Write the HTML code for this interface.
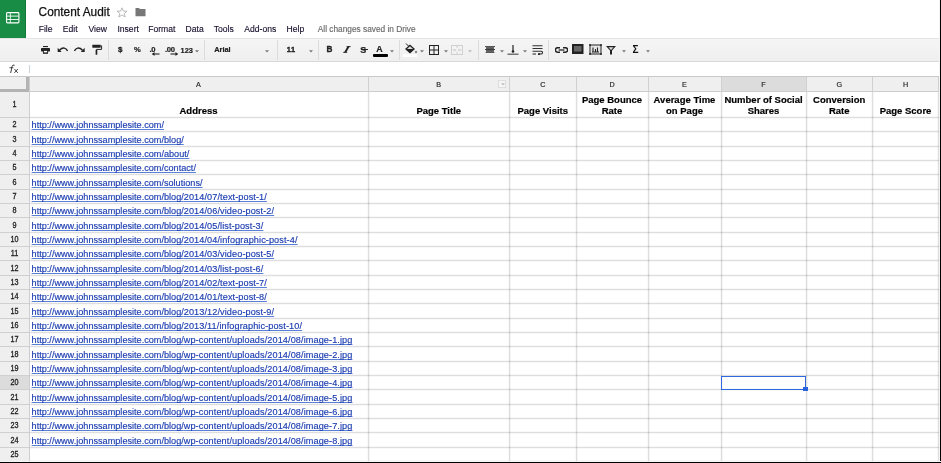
<!DOCTYPE html>
<html><head><meta charset="utf-8"><style>
html,body{margin:0;padding:0;background:#fff;}
body{width:941px;height:463px;position:relative;overflow:hidden;font-family:"Liberation Sans", sans-serif;}
.t{position:absolute;white-space:nowrap;}
.r{position:absolute;}
</style></head><body>
<div class="r" style="left:0px;top:0px;width:26px;height:38px;background:#188c45;"></div>
<svg class="r" style="left:6px;top:12px" width="14" height="12" viewBox="0 0 14 12">
<rect x="0.6" y="0.6" width="12.3" height="10.3" rx="0.8" fill="none" stroke="#fff" stroke-width="1.1"/>
<line x1="0.6" y1="4.1" x2="12.9" y2="4.1" stroke="#fff" stroke-width="0.9"/>
<line x1="0.6" y1="7.5" x2="12.9" y2="7.5" stroke="#fff" stroke-width="0.9"/>
<line x1="4.3" y1="0.6" x2="4.3" y2="10.9" stroke="#fff" stroke-width="0.9"/>
</svg>
<div class="r" style="left:25px;top:0px;width:1px;height:38px;background:#137a3a;"></div>
<div class="t" style="left:38.60px;top:7.07px;font-size:11.85px;line-height:11.85px;color:#111;font-weight:normal;-webkit-text-stroke:0.25px #111">Content Audit</div>
<svg class="r" style="left:116px;top:7px" width="12" height="11" viewBox="0 0 12 11">
<polygon points="6,0.8 7.4,4.1 11,4.2 8.2,6.5 9.2,10 6,8 2.8,10 3.8,6.5 1,4.2 4.6,4.1" fill="none" stroke="#aaa" stroke-width="0.8"/>
</svg>
<svg class="r" style="left:135px;top:7px" width="11" height="10" viewBox="0 0 11 10">
<path d="M0.5 1 H4 L5 2 H10.5 V9.3 H0.5 Z" fill="#777"/>
</svg>
<div class="t" style="left:38.70px;top:24.62px;font-size:8.6px;line-height:8.6px;color:#140c2a;font-weight:normal;-webkit-text-stroke:0.12px #140c2a;transform:scaleY(1.1);transform-origin:0 7.28px">File</div>
<div class="t" style="left:62.80px;top:24.62px;font-size:8.6px;line-height:8.6px;color:#140c2a;font-weight:normal;-webkit-text-stroke:0.12px #140c2a;transform:scaleY(1.1);transform-origin:0 7.28px">Edit</div>
<div class="t" style="left:88.40px;top:24.62px;font-size:8.6px;line-height:8.6px;color:#140c2a;font-weight:normal;-webkit-text-stroke:0.12px #140c2a;transform:scaleY(1.1);transform-origin:0 7.28px">View</div>
<div class="t" style="left:117.40px;top:24.62px;font-size:8.6px;line-height:8.6px;color:#140c2a;font-weight:normal;-webkit-text-stroke:0.12px #140c2a;transform:scaleY(1.1);transform-origin:0 7.28px">Insert</div>
<div class="t" style="left:148.20px;top:24.62px;font-size:8.6px;line-height:8.6px;color:#140c2a;font-weight:normal;-webkit-text-stroke:0.12px #140c2a;transform:scaleY(1.1);transform-origin:0 7.28px">Format</div>
<div class="t" style="left:185.60px;top:24.62px;font-size:8.6px;line-height:8.6px;color:#140c2a;font-weight:normal;-webkit-text-stroke:0.12px #140c2a;transform:scaleY(1.1);transform-origin:0 7.28px">Data</div>
<div class="t" style="left:213.70px;top:24.62px;font-size:8.6px;line-height:8.6px;color:#140c2a;font-weight:normal;-webkit-text-stroke:0.12px #140c2a;transform:scaleY(1.1);transform-origin:0 7.28px">Tools</div>
<div class="t" style="left:244.30px;top:24.62px;font-size:8.6px;line-height:8.6px;color:#140c2a;font-weight:normal;-webkit-text-stroke:0.12px #140c2a;transform:scaleY(1.1);transform-origin:0 7.28px">Add-ons</div>
<div class="t" style="left:286.50px;top:24.62px;font-size:8.6px;line-height:8.6px;color:#140c2a;font-weight:normal;-webkit-text-stroke:0.12px #140c2a;transform:scaleY(1.1);transform-origin:0 7.28px">Help</div>
<div class="t" style="left:317.80px;top:24.87px;font-size:8.3px;line-height:8.3px;color:#6a6a6a;font-weight:normal;-webkit-text-stroke:0.15px #6a6a6a">All changes saved in Drive</div>
<div class="r" style="left:0px;top:38px;width:941px;height:1px;background:#e5e5e5;"></div>
<div class="r" style="left:0px;top:39px;width:941px;height:22px;background:linear-gradient(#f5f5f5,#efefef);"></div>
<div class="r" style="left:0px;top:61px;width:941px;height:1px;background:#d9d9d9;"></div>
<div class="r" style="left:108px;top:40px;width:1px;height:20px;background:#dcdcdc;"></div>
<div class="r" style="left:204px;top:40px;width:1px;height:20px;background:#dcdcdc;"></div>
<div class="r" style="left:277px;top:40px;width:1px;height:20px;background:#dcdcdc;"></div>
<div class="r" style="left:318px;top:40px;width:1px;height:20px;background:#dcdcdc;"></div>
<div class="r" style="left:399px;top:40px;width:1px;height:20px;background:#dcdcdc;"></div>
<div class="r" style="left:478px;top:40px;width:1px;height:20px;background:#dcdcdc;"></div>
<div class="r" style="left:548px;top:40px;width:1px;height:20px;background:#dcdcdc;"></div>
<div id="icons">
<svg class="r" style="left:40px;top:45px" width="11" height="10" viewBox="0 0 11 10">
<rect x="3" y="1" width="5" height="1.1" fill="#222"/>
<rect x="1" y="3" width="9" height="3.4" rx="0.6" fill="#222"/>
<rect x="3.4" y="5.4" width="4.2" height="2.7" fill="#fff" stroke="#222" stroke-width="0.9"/>
<rect x="3" y="7.6" width="5" height="1" fill="#222"/>
</svg>
<svg class="r" style="left:57px;top:46px" width="11" height="7" viewBox="0 0 11 7">
<path d="M10.6 5 C9.2 2 6 0.6 2.5 4.2" fill="none" stroke="#222" stroke-width="1.5"/>
<polygon points="0.7,1.8 0.7,6 4.6,6" fill="#222"/>
</svg>
<svg class="r" style="left:74px;top:46px" width="11" height="7" viewBox="0 0 11 7">
<path d="M0.4 5 C1.8 2 5 0.6 8.5 4.2" fill="none" stroke="#222" stroke-width="1.5"/>
<polygon points="10.7,1.8 10.7,6 6.8,6" fill="#222"/>
</svg>
<svg class="r" style="left:92px;top:44px" width="11" height="12" viewBox="0 0 11 12">
<rect x="0.3" y="0.7" width="8.4" height="3" rx="0.4" fill="#222"/>
<path d="M8.6 1.8 H9.6 V5.4 H4.4 V6.5" fill="none" stroke="#222" stroke-width="1"/>
<rect x="3.6" y="6" width="1.7" height="4.7" rx="0.5" fill="#222"/>
</svg>
<div class="t" style="left:117.90px;top:46.43px;font-size:8.0px;line-height:8.0px;color:#222;font-weight:bold;-webkit-text-stroke:0.3px #222">$</div>
<div class="t" style="left:134.00px;top:46.37px;font-size:7.6px;line-height:7.6px;color:#222;font-weight:bold;-webkit-text-stroke:0.2px #222">%</div>
<div class="t" style="left:149.50px;top:46.37px;font-size:7.6px;line-height:7.6px;color:#222;font-weight:bold;letter-spacing:-0.3px;-webkit-text-stroke:0.2px #222">.0</div>
<svg class="r" style="left:152px;top:52px" width="8" height="4" viewBox="0 0 8 4"><path d="M0.5 2 H7.5" stroke="#222" stroke-width="1.1"/><polygon points="0,2 2.5,0 2.5,4" fill="#222"/></svg>
<div class="t" style="left:165.00px;top:46.37px;font-size:7.6px;line-height:7.6px;color:#222;font-weight:bold;letter-spacing:-0.3px;-webkit-text-stroke:0.2px #222">.00</div>
<svg class="r" style="left:170px;top:52px" width="8" height="4" viewBox="0 0 8 4"><path d="M0.5 2 H7.5" stroke="#222" stroke-width="1.1"/><polygon points="8,2 5.5,0 5.5,4" fill="#222"/></svg>
<div class="t" style="left:180.60px;top:46.54px;font-size:7.4px;line-height:7.4px;color:#222;font-weight:bold;-webkit-text-stroke:0.2px #222">123</div>
<svg class="r" style="left:195px;top:49.5px" width="4" height="3" viewBox="0 0 4 3"><polygon points="0,0.3 4,0.3 2,2.5" fill="#777"/></svg>
<div class="t" style="left:214.20px;top:46.34px;font-size:7.4px;line-height:7.4px;color:#222;font-weight:bold;-webkit-text-stroke:0.2px #222">Arial</div>
<svg class="r" style="left:264.5px;top:49.5px" width="4" height="3" viewBox="0 0 4 3"><polygon points="0,0.3 4,0.3 2,2.5" fill="#777"/></svg>
<div class="t" style="left:286.80px;top:46.44px;font-size:7.4px;line-height:7.4px;color:#222;font-weight:bold;-webkit-text-stroke:0.35px #222;letter-spacing:0.5px">11</div>
<svg class="r" style="left:308.5px;top:49.5px" width="4" height="3" viewBox="0 0 4 3"><polygon points="0,0.3 4,0.3 2,2.5" fill="#777"/></svg>
<div class="t" style="left:326.60px;top:46.16px;font-size:8.2px;line-height:8.2px;color:#222;font-weight:bold;-webkit-text-stroke:0.3px #222">B</div>
<svg class="r" style="left:343px;top:46px" width="8" height="7" viewBox="0 0 8 7"><polygon points="4.6,0.3 6.8,0.3 3.2,6.5 1,6.5" fill="#222"/><path d="M3.6 0.6 H7.6 M0.2 6.3 H4.2" stroke="#222" stroke-width="0.9"/></svg>
<div class="t" style="left:360.20px;top:45.58px;font-size:9px;line-height:9px;color:#222;font-weight:bold;-webkit-text-stroke:0.2px #222">S</div>
<div class="r" style="left:360.5px;top:49.2px;width:7px;height:1.1px;background:#222;"></div>
<div class="t" style="left:376.20px;top:44.95px;font-size:8.8px;line-height:8.8px;color:#222;font-weight:bold;-webkit-text-stroke:0.2px #222">A</div>
<div class="r" style="left:373px;top:54px;width:15px;height:3px;background:#000;border-radius:1px"></div>
<svg class="r" style="left:389.5px;top:50px" width="4" height="3" viewBox="0 0 4 3"><polygon points="0,0.3 4,0.3 2,2.5" fill="#777"/></svg>
<svg class="r" style="left:404px;top:43px" width="14" height="11" viewBox="0 0 14 11">
<path d="M2 0.5 L5 3.5" stroke="#222" stroke-width="1"/>
<polygon points="1,6 6,1.5 11,6 6,10.5" fill="#222"/>
<polygon points="3,6 6,3.3 9,6" fill="#ddd"/>
<circle cx="12" cy="9" r="1.2" fill="#888"/>
</svg>
<div class="r" style="left:403px;top:54px;width:14px;height:3px;background:#fff;"></div>
<svg class="r" style="left:420px;top:50px" width="4" height="3" viewBox="0 0 4 3"><polygon points="0,0.3 4,0.3 2,2.5" fill="#777"/></svg>
<svg class="r" style="left:429px;top:45px" width="10" height="10" viewBox="0 0 10 10">
<rect x="0.5" y="0.5" width="9" height="9" fill="none" stroke="#222" stroke-width="1"/>
<path d="M5 0.5 V9.5 M0.5 5 H9.5" stroke="#222" stroke-width="1"/>
</svg>
<svg class="r" style="left:444px;top:50px" width="4" height="3" viewBox="0 0 4 3"><polygon points="0,0.3 4,0.3 2,2.5" fill="#777"/></svg>
<svg class="r" style="left:451px;top:45px" width="12" height="10" viewBox="0 0 12 10">
<rect x="0.5" y="0.5" width="11" height="9" fill="none" stroke="#cfcfcf" stroke-width="1"/>
<path d="M6 0.5 V3 M6 7 V9.5 M1.5 5 H4.5 M7.5 5 H10.5" stroke="#cfcfcf" stroke-width="1"/>
<polygon points="5.2,5 3.6,3.6 3.6,6.4" fill="#cfcfcf"/><polygon points="6.8,5 8.4,3.6 8.4,6.4" fill="#cfcfcf"/>
</svg>
<svg class="r" style="left:468px;top:50px" width="4" height="3" viewBox="0 0 4 3"><polygon points="0,0.3 4,0.3 2,2.5" fill="#bbb"/></svg>
<svg class="r" style="left:484.5px;top:45.5px" width="10" height="7" viewBox="0 0 10 7">
<rect x="1" y="1" width="8" height="5" fill="#888"/>
<path d="M0 0.6 H10 M1.2 2.1 H8.8 M0 3.5 H10 M1.2 4.9 H8.8 M0.6 6.4 H9.4" stroke="#333" stroke-width="0.9"/>
</svg>
<svg class="r" style="left:499.5px;top:50px" width="4" height="3" viewBox="0 0 4 3"><polygon points="0,0.3 4,0.3 2,2.5" fill="#777"/></svg>
<svg class="r" style="left:507px;top:45px" width="12" height="10" viewBox="0 0 12 10">
<path d="M6 0 V6.5" stroke="#222" stroke-width="1.2"/>
<circle cx="6" cy="6.5" r="1.3" fill="#222"/>
<path d="M0.5 9.2 H11.5" stroke="#555" stroke-width="1.2"/>
</svg>
<svg class="r" style="left:523px;top:50px" width="4" height="3" viewBox="0 0 4 3"><polygon points="0,0.3 4,0.3 2,2.5" fill="#777"/></svg>
<svg class="r" style="left:532px;top:45px" width="11" height="10" viewBox="0 0 11 10">
<path d="M0.5 0.7 H10.5 M0.5 3.5 H10.5 M0.5 6.2 H9 Q10.5 6.2 10.5 7.6 Q10.5 9 9 9 H7" fill="none" stroke="#333" stroke-width="1.1"/>
<path d="M0.5 9 H4" stroke="#333" stroke-width="1.1"/>
<circle cx="7" cy="9" r="1.1" fill="#222"/>
</svg>
<svg class="r" style="left:554.5px;top:46.5px" width="13" height="6" viewBox="0 0 13 6">
<path d="M5 0.8 H2.6 A2.1 2.1 0 0 0 2.6 5.2 H5" fill="none" stroke="#222" stroke-width="1.4"/>
<path d="M8 0.8 H10.4 A2.1 2.1 0 0 1 10.4 5.2 H8" fill="none" stroke="#222" stroke-width="1.4"/>
<path d="M3.6 3 H9.4" stroke="#222" stroke-width="1.3"/>
</svg>
<svg class="r" style="left:572px;top:44px" width="12" height="10" viewBox="0 0 12 10">
<rect x="0" y="0" width="11.5" height="10" fill="#222"/>
<rect x="2" y="2" width="7.5" height="5.5" fill="#666"/>
</svg>
<svg class="r" style="left:588.5px;top:43.5px" width="13" height="11" viewBox="0 0 13 11">
<rect x="1" y="1" width="11" height="9" fill="#e6e6e6" stroke="#222" stroke-width="1"/>
<circle cx="1" cy="1" r="0.9" fill="#222"/><circle cx="12" cy="1" r="0.9" fill="#222"/><circle cx="1" cy="10" r="0.9" fill="#222"/><circle cx="12" cy="10" r="0.9" fill="#222"/>
<path d="M4 3.5 V8 M6.5 5 V8 M8.5 3.5 V8 M3 8 H10" stroke="#222" stroke-width="1.1"/>
</svg>
<svg class="r" style="left:606px;top:45.5px" width="10" height="9" viewBox="0 0 10 9">
<polygon points="0,0 10,0 6,4.5 6,8.5 4,8.5 4,4.5" fill="#222"/>
<polygon points="2.5,1.3 7.5,1.3 5,4" fill="#ddd"/>
</svg>
<svg class="r" style="left:622px;top:49.5px" width="4" height="3" viewBox="0 0 4 3"><polygon points="0,0.3 4,0.3 2,2.5" fill="#777"/></svg>
<div class="t" style="left:632.50px;top:44.83px;font-size:10px;line-height:10px;color:#111;font-weight:bold;">&Sigma;</div>
<svg class="r" style="left:645.5px;top:49.5px" width="4" height="3" viewBox="0 0 4 3"><polygon points="0,0.3 4,0.3 2,2.5" fill="#777"/></svg>
</div>
<svg class="r" style="left:8px;top:64px" width="12" height="10" viewBox="0 0 12 10">
<path d="M6.6 1.3 Q4.6 0.2 4 2.6 L2.7 9" fill="none" stroke="#333" stroke-width="0.95"/>
<path d="M1.4 3.7 H5.4" stroke="#333" stroke-width="0.85"/>
<path d="M6.4 5 L9.8 8.9 M9.8 5 L6.4 8.9" stroke="#333" stroke-width="0.9"/>
</svg>
<div class="r" style="left:29px;top:65px;width:1px;height:8px;background:#c9d1da;"></div>
<div class="r" style="left:0px;top:76px;width:941px;height:1px;background:#c9c9c9;"></div>
<div class="r" style="left:0px;top:77px;width:941px;height:15px;background:#efefef;"></div>
<div class="r" style="left:721px;top:77px;width:85px;height:15px;background:#dcdcdc;"></div>
<div class="r" style="left:0px;top:91px;width:941px;height:1px;background:#cdcdcd;"></div>
<div class="r" style="left:0px;top:92px;width:29px;height:371px;background:#efefef;"></div>
<div class="r" style="left:0px;top:376px;width:29px;height:13px;background:#dcdcdc;"></div>
<div class="r" style="left:26px;top:77px;width:3px;height:15px;background:#b3b3b3;"></div>
<div class="r" style="left:0px;top:89px;width:29px;height:3px;background:#b3b3b3;"></div>
<div class="r" style="left:0px;top:117px;width:29px;height:1px;background:#d0d0d0;"></div>
<div class="r" style="left:30px;top:116px;width:909px;height:3px;background:linear-gradient(#f8f8f8 0,#f8f8f8 1px,#dedede 1px,#dedede 2px,#f8f8f8 2px);mix-blend-mode:multiply"></div>
<div class="r" style="left:0px;top:131px;width:29px;height:1px;background:#d0d0d0;"></div>
<div class="r" style="left:30px;top:130px;width:909px;height:3px;background:linear-gradient(#f8f8f8 0,#f8f8f8 1px,#dedede 1px,#dedede 2px,#f8f8f8 2px);mix-blend-mode:multiply"></div>
<div class="r" style="left:0px;top:146px;width:29px;height:1px;background:#d0d0d0;"></div>
<div class="r" style="left:30px;top:145px;width:909px;height:3px;background:linear-gradient(#f8f8f8 0,#f8f8f8 1px,#dedede 1px,#dedede 2px,#f8f8f8 2px);mix-blend-mode:multiply"></div>
<div class="r" style="left:0px;top:160px;width:29px;height:1px;background:#d0d0d0;"></div>
<div class="r" style="left:30px;top:159px;width:909px;height:3px;background:linear-gradient(#f8f8f8 0,#f8f8f8 1px,#dedede 1px,#dedede 2px,#f8f8f8 2px);mix-blend-mode:multiply"></div>
<div class="r" style="left:0px;top:174px;width:29px;height:1px;background:#d0d0d0;"></div>
<div class="r" style="left:30px;top:173px;width:909px;height:3px;background:linear-gradient(#f8f8f8 0,#f8f8f8 1px,#dedede 1px,#dedede 2px,#f8f8f8 2px);mix-blend-mode:multiply"></div>
<div class="r" style="left:0px;top:189px;width:29px;height:1px;background:#d0d0d0;"></div>
<div class="r" style="left:30px;top:188px;width:909px;height:3px;background:linear-gradient(#f8f8f8 0,#f8f8f8 1px,#dedede 1px,#dedede 2px,#f8f8f8 2px);mix-blend-mode:multiply"></div>
<div class="r" style="left:0px;top:203px;width:29px;height:1px;background:#d0d0d0;"></div>
<div class="r" style="left:30px;top:202px;width:909px;height:3px;background:linear-gradient(#f8f8f8 0,#f8f8f8 1px,#dedede 1px,#dedede 2px,#f8f8f8 2px);mix-blend-mode:multiply"></div>
<div class="r" style="left:0px;top:217px;width:29px;height:1px;background:#d0d0d0;"></div>
<div class="r" style="left:30px;top:216px;width:909px;height:3px;background:linear-gradient(#f8f8f8 0,#f8f8f8 1px,#dedede 1px,#dedede 2px,#f8f8f8 2px);mix-blend-mode:multiply"></div>
<div class="r" style="left:0px;top:232px;width:29px;height:1px;background:#d0d0d0;"></div>
<div class="r" style="left:30px;top:231px;width:909px;height:3px;background:linear-gradient(#f8f8f8 0,#f8f8f8 1px,#dedede 1px,#dedede 2px,#f8f8f8 2px);mix-blend-mode:multiply"></div>
<div class="r" style="left:0px;top:246px;width:29px;height:1px;background:#d0d0d0;"></div>
<div class="r" style="left:30px;top:245px;width:909px;height:3px;background:linear-gradient(#f8f8f8 0,#f8f8f8 1px,#dedede 1px,#dedede 2px,#f8f8f8 2px);mix-blend-mode:multiply"></div>
<div class="r" style="left:0px;top:260px;width:29px;height:1px;background:#d0d0d0;"></div>
<div class="r" style="left:30px;top:259px;width:909px;height:3px;background:linear-gradient(#f8f8f8 0,#f8f8f8 1px,#dedede 1px,#dedede 2px,#f8f8f8 2px);mix-blend-mode:multiply"></div>
<div class="r" style="left:0px;top:275px;width:29px;height:1px;background:#d0d0d0;"></div>
<div class="r" style="left:30px;top:274px;width:909px;height:3px;background:linear-gradient(#f8f8f8 0,#f8f8f8 1px,#dedede 1px,#dedede 2px,#f8f8f8 2px);mix-blend-mode:multiply"></div>
<div class="r" style="left:0px;top:289px;width:29px;height:1px;background:#d0d0d0;"></div>
<div class="r" style="left:30px;top:288px;width:909px;height:3px;background:linear-gradient(#f8f8f8 0,#f8f8f8 1px,#dedede 1px,#dedede 2px,#f8f8f8 2px);mix-blend-mode:multiply"></div>
<div class="r" style="left:0px;top:303px;width:29px;height:1px;background:#d0d0d0;"></div>
<div class="r" style="left:30px;top:302px;width:909px;height:3px;background:linear-gradient(#f8f8f8 0,#f8f8f8 1px,#dedede 1px,#dedede 2px,#f8f8f8 2px);mix-blend-mode:multiply"></div>
<div class="r" style="left:0px;top:318px;width:29px;height:1px;background:#d0d0d0;"></div>
<div class="r" style="left:30px;top:317px;width:909px;height:3px;background:linear-gradient(#f8f8f8 0,#f8f8f8 1px,#dedede 1px,#dedede 2px,#f8f8f8 2px);mix-blend-mode:multiply"></div>
<div class="r" style="left:0px;top:332px;width:29px;height:1px;background:#d0d0d0;"></div>
<div class="r" style="left:30px;top:331px;width:909px;height:3px;background:linear-gradient(#f8f8f8 0,#f8f8f8 1px,#dedede 1px,#dedede 2px,#f8f8f8 2px);mix-blend-mode:multiply"></div>
<div class="r" style="left:0px;top:346px;width:29px;height:1px;background:#d0d0d0;"></div>
<div class="r" style="left:30px;top:345px;width:909px;height:3px;background:linear-gradient(#f8f8f8 0,#f8f8f8 1px,#dedede 1px,#dedede 2px,#f8f8f8 2px);mix-blend-mode:multiply"></div>
<div class="r" style="left:0px;top:361px;width:29px;height:1px;background:#d0d0d0;"></div>
<div class="r" style="left:30px;top:360px;width:909px;height:3px;background:linear-gradient(#f8f8f8 0,#f8f8f8 1px,#dedede 1px,#dedede 2px,#f8f8f8 2px);mix-blend-mode:multiply"></div>
<div class="r" style="left:0px;top:375px;width:29px;height:1px;background:#d0d0d0;"></div>
<div class="r" style="left:30px;top:374px;width:909px;height:3px;background:linear-gradient(#f8f8f8 0,#f8f8f8 1px,#dedede 1px,#dedede 2px,#f8f8f8 2px);mix-blend-mode:multiply"></div>
<div class="r" style="left:0px;top:389px;width:29px;height:1px;background:#d0d0d0;"></div>
<div class="r" style="left:30px;top:388px;width:909px;height:3px;background:linear-gradient(#f8f8f8 0,#f8f8f8 1px,#dedede 1px,#dedede 2px,#f8f8f8 2px);mix-blend-mode:multiply"></div>
<div class="r" style="left:0px;top:404px;width:29px;height:1px;background:#d0d0d0;"></div>
<div class="r" style="left:30px;top:403px;width:909px;height:3px;background:linear-gradient(#f8f8f8 0,#f8f8f8 1px,#dedede 1px,#dedede 2px,#f8f8f8 2px);mix-blend-mode:multiply"></div>
<div class="r" style="left:0px;top:418px;width:29px;height:1px;background:#d0d0d0;"></div>
<div class="r" style="left:30px;top:417px;width:909px;height:3px;background:linear-gradient(#f8f8f8 0,#f8f8f8 1px,#dedede 1px,#dedede 2px,#f8f8f8 2px);mix-blend-mode:multiply"></div>
<div class="r" style="left:0px;top:432px;width:29px;height:1px;background:#d0d0d0;"></div>
<div class="r" style="left:30px;top:431px;width:909px;height:3px;background:linear-gradient(#f8f8f8 0,#f8f8f8 1px,#dedede 1px,#dedede 2px,#f8f8f8 2px);mix-blend-mode:multiply"></div>
<div class="r" style="left:0px;top:447px;width:29px;height:1px;background:#d0d0d0;"></div>
<div class="r" style="left:30px;top:446px;width:909px;height:3px;background:linear-gradient(#f8f8f8 0,#f8f8f8 1px,#dedede 1px,#dedede 2px,#f8f8f8 2px);mix-blend-mode:multiply"></div>
<div class="r" style="left:0px;top:461px;width:29px;height:1px;background:#d0d0d0;"></div>
<div class="r" style="left:30px;top:460px;width:909px;height:3px;background:linear-gradient(#f8f8f8 0,#f8f8f8 1px,#dedede 1px,#dedede 2px,#f8f8f8 2px);mix-blend-mode:multiply"></div>
<div class="r" style="left:29px;top:77px;width:1px;height:386px;background:#cdcdcd;"></div>
<div class="r" style="left:368px;top:77px;width:1px;height:15px;background:#d0d0d0;"></div>
<div class="r" style="left:367px;top:92px;width:3px;height:371px;background:linear-gradient(90deg,#f9f9f9 0,#f9f9f9 1px,#dedede 1px,#dedede 2px,#f5f5f5 2px);mix-blend-mode:multiply"></div>
<div class="r" style="left:509px;top:77px;width:1px;height:15px;background:#d0d0d0;"></div>
<div class="r" style="left:508px;top:92px;width:3px;height:371px;background:linear-gradient(90deg,#f9f9f9 0,#f9f9f9 1px,#dedede 1px,#dedede 2px,#f5f5f5 2px);mix-blend-mode:multiply"></div>
<div class="r" style="left:576px;top:77px;width:1px;height:15px;background:#d0d0d0;"></div>
<div class="r" style="left:575px;top:92px;width:3px;height:371px;background:linear-gradient(90deg,#f9f9f9 0,#f9f9f9 1px,#dedede 1px,#dedede 2px,#f5f5f5 2px);mix-blend-mode:multiply"></div>
<div class="r" style="left:648px;top:77px;width:1px;height:15px;background:#d0d0d0;"></div>
<div class="r" style="left:647px;top:92px;width:3px;height:371px;background:linear-gradient(90deg,#f9f9f9 0,#f9f9f9 1px,#dedede 1px,#dedede 2px,#f5f5f5 2px);mix-blend-mode:multiply"></div>
<div class="r" style="left:721px;top:77px;width:1px;height:15px;background:#d0d0d0;"></div>
<div class="r" style="left:720px;top:92px;width:3px;height:371px;background:linear-gradient(90deg,#f9f9f9 0,#f9f9f9 1px,#dedede 1px,#dedede 2px,#f5f5f5 2px);mix-blend-mode:multiply"></div>
<div class="r" style="left:806px;top:77px;width:1px;height:15px;background:#d0d0d0;"></div>
<div class="r" style="left:805px;top:92px;width:3px;height:371px;background:linear-gradient(90deg,#f9f9f9 0,#f9f9f9 1px,#dedede 1px,#dedede 2px,#f5f5f5 2px);mix-blend-mode:multiply"></div>
<div class="r" style="left:872px;top:77px;width:1px;height:15px;background:#d0d0d0;"></div>
<div class="r" style="left:871px;top:92px;width:3px;height:371px;background:linear-gradient(90deg,#f9f9f9 0,#f9f9f9 1px,#dedede 1px,#dedede 2px,#f5f5f5 2px);mix-blend-mode:multiply"></div>
<div class="r" style="left:938px;top:77px;width:1px;height:15px;background:#d0d0d0;"></div>
<div class="r" style="left:937px;top:92px;width:3px;height:371px;background:linear-gradient(90deg,#f9f9f9 0,#f9f9f9 1px,#dedede 1px,#dedede 2px,#f5f5f5 2px);mix-blend-mode:multiply"></div>
<div class="t" style="left:29.0px;width:339.0px;text-align:center;top:80.71px;font-size:7.2px;line-height:7.2px;color:#222;-webkit-text-stroke:0.15px #222">A</div>
<div class="t" style="left:368.0px;width:141.5px;text-align:center;top:80.71px;font-size:7.2px;line-height:7.2px;color:#222;-webkit-text-stroke:0.15px #222">B</div>
<div class="t" style="left:509.5px;width:66.5px;text-align:center;top:80.71px;font-size:7.2px;line-height:7.2px;color:#222;-webkit-text-stroke:0.15px #222">C</div>
<div class="t" style="left:576.0px;width:72.0px;text-align:center;top:80.71px;font-size:7.2px;line-height:7.2px;color:#222;-webkit-text-stroke:0.15px #222">D</div>
<div class="t" style="left:648.0px;width:73.0px;text-align:center;top:80.71px;font-size:7.2px;line-height:7.2px;color:#222;-webkit-text-stroke:0.15px #222">E</div>
<div class="t" style="left:721.0px;width:85.0px;text-align:center;top:80.71px;font-size:7.2px;line-height:7.2px;color:#222;-webkit-text-stroke:0.15px #222">F</div>
<div class="t" style="left:806.0px;width:66.5px;text-align:center;top:80.71px;font-size:7.2px;line-height:7.2px;color:#222;-webkit-text-stroke:0.15px #222">G</div>
<div class="t" style="left:872.5px;width:66.0px;text-align:center;top:80.71px;font-size:7.2px;line-height:7.2px;color:#222;-webkit-text-stroke:0.15px #222">H</div>
<div class="r" style="left:498px;top:80px;width:8px;height:8px;background:#f6f6f6;box-sizing:border-box;border:1px solid #dedede"></div>
<svg class="r" style="left:500.5px;top:83px" width="4" height="3" viewBox="0 0 4 3"><polygon points="0,0.3 4,0.3 2,2.5" fill="#bbb"/></svg>
<div class="t" style="left:0;width:29px;text-align:center;top:101.26px;font-size:8.2px;line-height:8.2px;color:#222;font-weight:normal;-webkit-text-stroke:0.3px #222;transform:scaleX(0.88)">1</div>
<div class="t" style="left:0;width:29px;text-align:center;top:121.26px;font-size:8.2px;line-height:8.2px;color:#222;font-weight:normal;-webkit-text-stroke:0.3px #222;transform:scaleX(0.88)">2</div>
<div class="t" style="left:0;width:29px;text-align:center;top:135.76px;font-size:8.2px;line-height:8.2px;color:#222;font-weight:normal;-webkit-text-stroke:0.3px #222;transform:scaleX(0.88)">3</div>
<div class="t" style="left:0;width:29px;text-align:center;top:150.26px;font-size:8.2px;line-height:8.2px;color:#222;font-weight:normal;-webkit-text-stroke:0.3px #222;transform:scaleX(0.88)">4</div>
<div class="t" style="left:0;width:29px;text-align:center;top:164.26px;font-size:8.2px;line-height:8.2px;color:#222;font-weight:normal;-webkit-text-stroke:0.3px #222;transform:scaleX(0.88)">5</div>
<div class="t" style="left:0;width:29px;text-align:center;top:178.76px;font-size:8.2px;line-height:8.2px;color:#222;font-weight:normal;-webkit-text-stroke:0.3px #222;transform:scaleX(0.88)">6</div>
<div class="t" style="left:0;width:29px;text-align:center;top:193.26px;font-size:8.2px;line-height:8.2px;color:#222;font-weight:normal;-webkit-text-stroke:0.3px #222;transform:scaleX(0.88)">7</div>
<div class="t" style="left:0;width:29px;text-align:center;top:207.26px;font-size:8.2px;line-height:8.2px;color:#222;font-weight:normal;-webkit-text-stroke:0.3px #222;transform:scaleX(0.88)">8</div>
<div class="t" style="left:0;width:29px;text-align:center;top:221.76px;font-size:8.2px;line-height:8.2px;color:#222;font-weight:normal;-webkit-text-stroke:0.3px #222;transform:scaleX(0.88)">9</div>
<div class="t" style="left:0;width:29px;text-align:center;top:236.26px;font-size:8.2px;line-height:8.2px;color:#222;font-weight:normal;-webkit-text-stroke:0.3px #222;transform:scaleX(0.88)">10</div>
<div class="t" style="left:0;width:29px;text-align:center;top:250.26px;font-size:8.2px;line-height:8.2px;color:#222;font-weight:normal;-webkit-text-stroke:0.3px #222;transform:scaleX(0.88)">11</div>
<div class="t" style="left:0;width:29px;text-align:center;top:264.76px;font-size:8.2px;line-height:8.2px;color:#222;font-weight:normal;-webkit-text-stroke:0.3px #222;transform:scaleX(0.88)">12</div>
<div class="t" style="left:0;width:29px;text-align:center;top:279.26px;font-size:8.2px;line-height:8.2px;color:#222;font-weight:normal;-webkit-text-stroke:0.3px #222;transform:scaleX(0.88)">13</div>
<div class="t" style="left:0;width:29px;text-align:center;top:293.26px;font-size:8.2px;line-height:8.2px;color:#222;font-weight:normal;-webkit-text-stroke:0.3px #222;transform:scaleX(0.88)">14</div>
<div class="t" style="left:0;width:29px;text-align:center;top:307.76px;font-size:8.2px;line-height:8.2px;color:#222;font-weight:normal;-webkit-text-stroke:0.3px #222;transform:scaleX(0.88)">15</div>
<div class="t" style="left:0;width:29px;text-align:center;top:322.26px;font-size:8.2px;line-height:8.2px;color:#222;font-weight:normal;-webkit-text-stroke:0.3px #222;transform:scaleX(0.88)">16</div>
<div class="t" style="left:0;width:29px;text-align:center;top:336.26px;font-size:8.2px;line-height:8.2px;color:#222;font-weight:normal;-webkit-text-stroke:0.3px #222;transform:scaleX(0.88)">17</div>
<div class="t" style="left:0;width:29px;text-align:center;top:350.76px;font-size:8.2px;line-height:8.2px;color:#222;font-weight:normal;-webkit-text-stroke:0.3px #222;transform:scaleX(0.88)">18</div>
<div class="t" style="left:0;width:29px;text-align:center;top:365.26px;font-size:8.2px;line-height:8.2px;color:#222;font-weight:normal;-webkit-text-stroke:0.3px #222;transform:scaleX(0.88)">19</div>
<div class="t" style="left:0;width:29px;text-align:center;top:379.26px;font-size:8.2px;line-height:8.2px;color:#222;font-weight:normal;-webkit-text-stroke:0.3px #222;transform:scaleX(0.88)">20</div>
<div class="t" style="left:0;width:29px;text-align:center;top:393.76px;font-size:8.2px;line-height:8.2px;color:#222;font-weight:normal;-webkit-text-stroke:0.3px #222;transform:scaleX(0.88)">21</div>
<div class="t" style="left:0;width:29px;text-align:center;top:408.26px;font-size:8.2px;line-height:8.2px;color:#222;font-weight:normal;-webkit-text-stroke:0.3px #222;transform:scaleX(0.88)">22</div>
<div class="t" style="left:0;width:29px;text-align:center;top:422.26px;font-size:8.2px;line-height:8.2px;color:#222;font-weight:normal;-webkit-text-stroke:0.3px #222;transform:scaleX(0.88)">23</div>
<div class="t" style="left:0;width:29px;text-align:center;top:436.76px;font-size:8.2px;line-height:8.2px;color:#222;font-weight:normal;-webkit-text-stroke:0.3px #222;transform:scaleX(0.88)">24</div>
<div class="t" style="left:0;width:29px;text-align:center;top:451.26px;font-size:8.2px;line-height:8.2px;color:#222;font-weight:normal;-webkit-text-stroke:0.3px #222;transform:scaleX(0.88)">25</div>
<div class="t" style="left:29.0px;width:339.0px;text-align:center;top:106.06px;font-size:9.5px;line-height:9.5px;color:#000;font-weight:bold;-webkit-text-stroke:0.2px #000;transform:scaleY(1.05);transform-origin:50% 8.04px">Address</div>
<div class="t" style="left:368.0px;width:141.5px;text-align:center;top:106.06px;font-size:9.5px;line-height:9.5px;color:#000;font-weight:bold;-webkit-text-stroke:0.2px #000;transform:scaleY(1.05);transform-origin:50% 8.04px">Page Title</div>
<div class="t" style="left:509.5px;width:66.5px;text-align:center;top:106.06px;font-size:9.5px;line-height:9.5px;color:#000;font-weight:bold;-webkit-text-stroke:0.2px #000;transform:scaleY(1.05);transform-origin:50% 8.04px">Page Visits</div>
<div class="t" style="left:576.0px;width:72.0px;text-align:center;top:95.06px;font-size:9.5px;line-height:9.5px;color:#000;font-weight:bold;-webkit-text-stroke:0.2px #000;transform:scaleY(1.05);transform-origin:50% 8.04px">Page Bounce</div>
<div class="t" style="left:576.0px;width:72.0px;text-align:center;top:106.16px;font-size:9.5px;line-height:9.5px;color:#000;font-weight:bold;-webkit-text-stroke:0.2px #000;transform:scaleY(1.05);transform-origin:50% 8.04px">Rate</div>
<div class="t" style="left:648.0px;width:73.0px;text-align:center;top:95.06px;font-size:9.5px;line-height:9.5px;color:#000;font-weight:bold;-webkit-text-stroke:0.2px #000;transform:scaleY(1.05);transform-origin:50% 8.04px">Average Time</div>
<div class="t" style="left:648.0px;width:73.0px;text-align:center;top:106.16px;font-size:9.5px;line-height:9.5px;color:#000;font-weight:bold;-webkit-text-stroke:0.2px #000;transform:scaleY(1.05);transform-origin:50% 8.04px">on Page</div>
<div class="t" style="left:721.0px;width:85.0px;text-align:center;top:95.06px;font-size:9.5px;line-height:9.5px;color:#000;font-weight:bold;-webkit-text-stroke:0.2px #000;transform:scaleY(1.05);transform-origin:50% 8.04px">Number of Social</div>
<div class="t" style="left:721.0px;width:85.0px;text-align:center;top:106.16px;font-size:9.5px;line-height:9.5px;color:#000;font-weight:bold;-webkit-text-stroke:0.2px #000;transform:scaleY(1.05);transform-origin:50% 8.04px">Shares</div>
<div class="t" style="left:806.0px;width:66.5px;text-align:center;top:95.06px;font-size:9.5px;line-height:9.5px;color:#000;font-weight:bold;-webkit-text-stroke:0.2px #000;transform:scaleY(1.05);transform-origin:50% 8.04px">Conversion</div>
<div class="t" style="left:806.0px;width:66.5px;text-align:center;top:106.16px;font-size:9.5px;line-height:9.5px;color:#000;font-weight:bold;-webkit-text-stroke:0.2px #000;transform:scaleY(1.05);transform-origin:50% 8.04px">Rate</div>
<div class="t" style="left:872.5px;width:66.0px;text-align:center;top:106.06px;font-size:9.5px;line-height:9.5px;color:#000;font-weight:bold;-webkit-text-stroke:0.2px #000;transform:scaleY(1.05);transform-origin:50% 8.04px">Page Score</div>
<div class="t" style="left:31.60px;top:121.35px;font-size:9.15px;line-height:9.15px;color:#1a3cb0;font-weight:normal;text-decoration:underline;text-decoration-skip-ink:none;text-decoration-color:#5a7fd6;-webkit-text-stroke:0.15px #1a3cb0">http://www.johnssamplesite.com/</div>
<div class="t" style="left:31.60px;top:135.68px;font-size:9.15px;line-height:9.15px;color:#1a3cb0;font-weight:normal;text-decoration:underline;text-decoration-skip-ink:none;text-decoration-color:#5a7fd6;-webkit-text-stroke:0.15px #1a3cb0">http://www.johnssamplesite.com/blog/</div>
<div class="t" style="left:31.60px;top:150.01px;font-size:9.15px;line-height:9.15px;color:#1a3cb0;font-weight:normal;text-decoration:underline;text-decoration-skip-ink:none;text-decoration-color:#5a7fd6;-webkit-text-stroke:0.15px #1a3cb0">http://www.johnssamplesite.com/about/</div>
<div class="t" style="left:31.60px;top:164.34px;font-size:9.15px;line-height:9.15px;color:#1a3cb0;font-weight:normal;text-decoration:underline;text-decoration-skip-ink:none;text-decoration-color:#5a7fd6;-webkit-text-stroke:0.15px #1a3cb0">http://www.johnssamplesite.com/contact/</div>
<div class="t" style="left:31.60px;top:178.67px;font-size:9.15px;line-height:9.15px;color:#1a3cb0;font-weight:normal;text-decoration:underline;text-decoration-skip-ink:none;text-decoration-color:#5a7fd6;-webkit-text-stroke:0.15px #1a3cb0">http://www.johnssamplesite.com/solutions/</div>
<div class="t" style="left:31.60px;top:193.00px;font-size:9.15px;line-height:9.15px;color:#1a3cb0;font-weight:normal;text-decoration:underline;text-decoration-skip-ink:none;text-decoration-color:#5a7fd6;-webkit-text-stroke:0.15px #1a3cb0">http://www.johnssamplesite.com/blog/<span style="letter-spacing:0.1px">2014/07/text-post-1/</span></div>
<div class="t" style="left:31.60px;top:207.33px;font-size:9.15px;line-height:9.15px;color:#1a3cb0;font-weight:normal;text-decoration:underline;text-decoration-skip-ink:none;text-decoration-color:#5a7fd6;-webkit-text-stroke:0.15px #1a3cb0">http://www.johnssamplesite.com/blog/<span style="letter-spacing:0.1px">2014/06/video-post-2/</span></div>
<div class="t" style="left:31.60px;top:221.66px;font-size:9.15px;line-height:9.15px;color:#1a3cb0;font-weight:normal;text-decoration:underline;text-decoration-skip-ink:none;text-decoration-color:#5a7fd6;-webkit-text-stroke:0.15px #1a3cb0">http://www.johnssamplesite.com/blog/<span style="letter-spacing:0.1px">2014/05/list-post-3/</span></div>
<div class="t" style="left:31.60px;top:235.99px;font-size:9.15px;line-height:9.15px;color:#1a3cb0;font-weight:normal;text-decoration:underline;text-decoration-skip-ink:none;text-decoration-color:#5a7fd6;-webkit-text-stroke:0.15px #1a3cb0">http://www.johnssamplesite.com/blog/<span style="letter-spacing:0.1px">2014/04/infographic-post-4/</span></div>
<div class="t" style="left:31.60px;top:250.32px;font-size:9.15px;line-height:9.15px;color:#1a3cb0;font-weight:normal;text-decoration:underline;text-decoration-skip-ink:none;text-decoration-color:#5a7fd6;-webkit-text-stroke:0.15px #1a3cb0">http://www.johnssamplesite.com/blog/<span style="letter-spacing:0.1px">2014/03/video-post-5/</span></div>
<div class="t" style="left:31.60px;top:264.65px;font-size:9.15px;line-height:9.15px;color:#1a3cb0;font-weight:normal;text-decoration:underline;text-decoration-skip-ink:none;text-decoration-color:#5a7fd6;-webkit-text-stroke:0.15px #1a3cb0">http://www.johnssamplesite.com/blog/<span style="letter-spacing:0.1px">2014/03/list-post-6/</span></div>
<div class="t" style="left:31.60px;top:278.98px;font-size:9.15px;line-height:9.15px;color:#1a3cb0;font-weight:normal;text-decoration:underline;text-decoration-skip-ink:none;text-decoration-color:#5a7fd6;-webkit-text-stroke:0.15px #1a3cb0">http://www.johnssamplesite.com/blog/<span style="letter-spacing:0.1px">2014/02/text-post-7/</span></div>
<div class="t" style="left:31.60px;top:293.31px;font-size:9.15px;line-height:9.15px;color:#1a3cb0;font-weight:normal;text-decoration:underline;text-decoration-skip-ink:none;text-decoration-color:#5a7fd6;-webkit-text-stroke:0.15px #1a3cb0">http://www.johnssamplesite.com/blog/<span style="letter-spacing:0.1px">2014/01/text-post-8/</span></div>
<div class="t" style="left:31.60px;top:307.64px;font-size:9.15px;line-height:9.15px;color:#1a3cb0;font-weight:normal;text-decoration:underline;text-decoration-skip-ink:none;text-decoration-color:#5a7fd6;-webkit-text-stroke:0.15px #1a3cb0">http://www.johnssamplesite.com/blog/<span style="letter-spacing:0.1px">2013/12/video-post-9/</span></div>
<div class="t" style="left:31.60px;top:321.97px;font-size:9.15px;line-height:9.15px;color:#1a3cb0;font-weight:normal;text-decoration:underline;text-decoration-skip-ink:none;text-decoration-color:#5a7fd6;-webkit-text-stroke:0.15px #1a3cb0">http://www.johnssamplesite.com/blog/<span style="letter-spacing:0.1px">2013/11/infographic-post-10/</span></div>
<div class="t" style="left:31.60px;top:336.30px;font-size:9.15px;line-height:9.15px;color:#1a3cb0;font-weight:normal;text-decoration:underline;text-decoration-skip-ink:none;text-decoration-color:#5a7fd6;-webkit-text-stroke:0.15px #1a3cb0">http://www.johnssamplesite.com/blog/<span style="letter-spacing:0.1px">wp-content/uploads/2014/08/image-1.jpg</span></div>
<div class="t" style="left:31.60px;top:350.63px;font-size:9.15px;line-height:9.15px;color:#1a3cb0;font-weight:normal;text-decoration:underline;text-decoration-skip-ink:none;text-decoration-color:#5a7fd6;-webkit-text-stroke:0.15px #1a3cb0">http://www.johnssamplesite.com/blog/<span style="letter-spacing:0.1px">wp-content/uploads/2014/08/image-2.jpg</span></div>
<div class="t" style="left:31.60px;top:364.96px;font-size:9.15px;line-height:9.15px;color:#1a3cb0;font-weight:normal;text-decoration:underline;text-decoration-skip-ink:none;text-decoration-color:#5a7fd6;-webkit-text-stroke:0.15px #1a3cb0">http://www.johnssamplesite.com/blog/<span style="letter-spacing:0.1px">wp-content/uploads/2014/08/image-3.jpg</span></div>
<div class="t" style="left:31.60px;top:379.29px;font-size:9.15px;line-height:9.15px;color:#1a3cb0;font-weight:normal;text-decoration:underline;text-decoration-skip-ink:none;text-decoration-color:#5a7fd6;-webkit-text-stroke:0.15px #1a3cb0">http://www.johnssamplesite.com/blog/<span style="letter-spacing:0.1px">wp-content/uploads/2014/08/image-4.jpg</span></div>
<div class="t" style="left:31.60px;top:393.62px;font-size:9.15px;line-height:9.15px;color:#1a3cb0;font-weight:normal;text-decoration:underline;text-decoration-skip-ink:none;text-decoration-color:#5a7fd6;-webkit-text-stroke:0.15px #1a3cb0">http://www.johnssamplesite.com/blog/<span style="letter-spacing:0.1px">wp-content/uploads/2014/08/image-5.jpg</span></div>
<div class="t" style="left:31.60px;top:407.95px;font-size:9.15px;line-height:9.15px;color:#1a3cb0;font-weight:normal;text-decoration:underline;text-decoration-skip-ink:none;text-decoration-color:#5a7fd6;-webkit-text-stroke:0.15px #1a3cb0">http://www.johnssamplesite.com/blog/<span style="letter-spacing:0.1px">wp-content/uploads/2014/08/image-6.jpg</span></div>
<div class="t" style="left:31.60px;top:422.28px;font-size:9.15px;line-height:9.15px;color:#1a3cb0;font-weight:normal;text-decoration:underline;text-decoration-skip-ink:none;text-decoration-color:#5a7fd6;-webkit-text-stroke:0.15px #1a3cb0">http://www.johnssamplesite.com/blog/<span style="letter-spacing:0.1px">wp-content/uploads/2014/08/image-7.jpg</span></div>
<div class="t" style="left:31.60px;top:436.61px;font-size:9.15px;line-height:9.15px;color:#1a3cb0;font-weight:normal;text-decoration:underline;text-decoration-skip-ink:none;text-decoration-color:#5a7fd6;-webkit-text-stroke:0.15px #1a3cb0">http://www.johnssamplesite.com/blog/<span style="letter-spacing:0.1px">wp-content/uploads/2014/08/image-8.jpg</span></div>
<div class="r" style="left:721px;top:375.6px;width:85px;height:14.4px;box-sizing:border-box;border:1.6px solid #3068e0"></div>
<div class="r" style="left:803.2px;top:386.7px;width:4.6px;height:4.6px;background:#2a62de;"></div>
<div class="r" style="left:939px;top:0px;width:1px;height:463px;background:#f4f4f4;"></div>
<div class="r" style="left:940px;top:0px;width:1px;height:463px;background:#000;"></div>
<div class="r" style="left:0px;top:461px;width:941px;height:1px;background:#f4f4f4;"></div>
<div class="r" style="left:0px;top:462px;width:941px;height:1px;background:#000;"></div>
</body></html>
